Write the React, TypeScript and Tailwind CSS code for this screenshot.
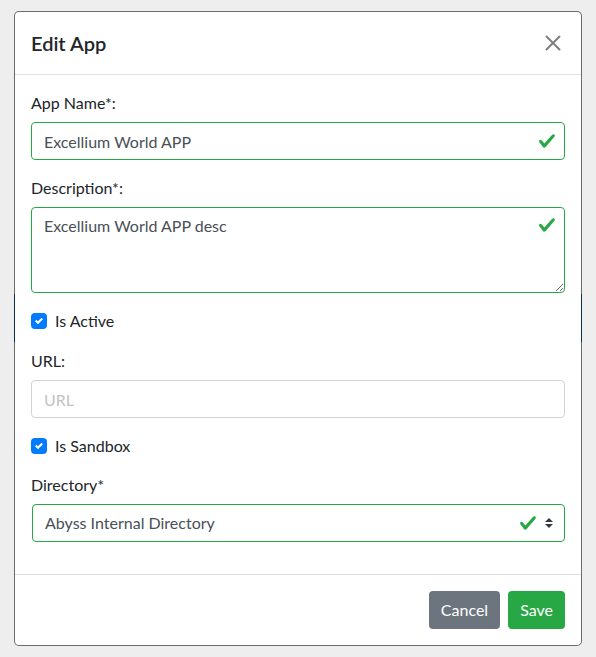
import React from "react";

// Bootstrap-ish palette
// valid green #28a745, primary #007bff, secondary #6c757d, text #212529

function ValidCheck({ className }: { className?: string }) {
  return (
    <svg viewBox="0 0 8 8" className={className} aria-hidden="true">
      <path
        fill="#28a745"
        d="M2.3 6.73L.6 4.53c-.4-1.04.46-1.4 1.1-.8l1.1 1.4 3.4-3.8c.6-.63 1.6-.27 1.2.7l-4 4.6c-.43.5-.8.4-1.1.1z"
      />
    </svg>
  );
}

function Checkbox({ label, className }: { label: string; className?: string }) {
  return (
    <label className={`flex items-start gap-2 leading-6 text-[#212529] ${className ?? ""}`}>
      <span className="mt-1 flex h-4 w-4 items-center justify-center rounded bg-[#007bff]">
        <svg viewBox="0 0 8 8" className="h-2 w-2" aria-hidden="true">
          <path fill="#fff" d="M6.564.75l-3.59 3.612-1.538-1.55L0 4.26l2.974 2.99L8 2.193z" />
        </svg>
      </span>
      <span>{label}</span>
    </label>
  );
}

export default function App() {
  return (
    <div className="relative min-h-screen bg-[#eeeeee] px-[14px] pt-[11px] font-['Lato',sans-serif] text-base">
      {/* page element showing through the modal border */}
      <div className="absolute left-[14px] top-[294px] h-[48px] w-[568px] bg-[#176aa0]" />

      <div className="relative w-[568px] rounded-[5px] border border-[rgba(0,0,0,0.55)] bg-white bg-clip-padding">
        {/* header */}
        <div className="flex items-start justify-between border-b border-[#dee2e6] p-4">
          <h5 className="text-[20px] font-semibold leading-[30px] text-[#212529]">Edit App</h5>
          <button className="mr-1 mt-[7px]" aria-label="Close">
            <svg viewBox="0 0 16 16" className="block h-4 w-4" aria-hidden="true">
              <path d="M1.5 1.5L14.5 14.5M14.5 1.5L1.5 14.5" stroke="#7f7f7f" strokeWidth="2" strokeLinecap="round" />
            </svg>
          </button>
        </div>

        {/* body */}
        <div className="p-4 leading-6 text-[#212529]">
          <div className="mb-4">
            <label className="mb-[7px] block">App Name*:</label>
            <div className="relative">
              <input
                defaultValue="Excellium World APP"
                className="block h-[38px] w-full rounded border border-[#28a745] px-3 pr-9 text-[#495057] outline-none"
              />
              <ValidCheck className="absolute right-[9px] top-[10px] h-[18px] w-[18px]" />
            </div>
          </div>

          <div className="mb-4">
            <label className="mb-[7px] block">Description*:</label>
            <div className="relative">
              <textarea
                defaultValue="Excellium World APP desc"
                rows={3}
                className="block h-[86px] w-full rounded border border-[#28a745] px-3 py-1.5 pr-9 leading-6 text-[#495057] outline-none"
              />
              <ValidCheck className="absolute right-[9px] top-[9px] h-[18px] w-[18px]" />
            </div>
          </div>

          <Checkbox label="Is Active" className="mb-4" />

          <div className="mb-4">
            <label className="mb-[7px] block">URL:</label>
            <input
              placeholder="URL"
              className="block h-[38px] w-full rounded border border-[#ced4da] px-3 text-[#495057] outline-none placeholder:text-[#c2c2c2]"
            />
          </div>

          <Checkbox label="Is Sandbox" className="mb-[15px]" />

          <div className="mb-4">
            <label className="mb-[7px] block">Directory*</label>
            <div className="relative ml-px">
              <select
                defaultValue="abyss"
                className="block h-[38px] w-full appearance-none rounded border border-[#28a745] bg-white pl-3 pr-16 text-[#495057] outline-none"
              >
                <option value="abyss">Abyss Internal Directory</option>
              </select>
              <ValidCheck className="pointer-events-none absolute right-[28px] top-[10px] h-[18px] w-[18px]" />
              <svg viewBox="0 0 4 5" className="pointer-events-none absolute right-3 top-[14px] h-[10px] w-2" aria-hidden="true">
                <path fill="#343a40" d="M2 0L0 2h4zm0 5L0 3h4z" />
              </svg>
            </div>
          </div>
        </div>

        {/* footer */}
        <div className="flex items-center justify-end gap-2 border-t border-[#dee2e6] py-4 pr-4">
          <button className="h-[38px] rounded bg-[#6c757d] px-3 text-white">Cancel</button>
          <button className="h-[38px] rounded bg-[#28a745] px-3 text-white">Save</button>
        </div>
      </div>
    </div>
  );
}
